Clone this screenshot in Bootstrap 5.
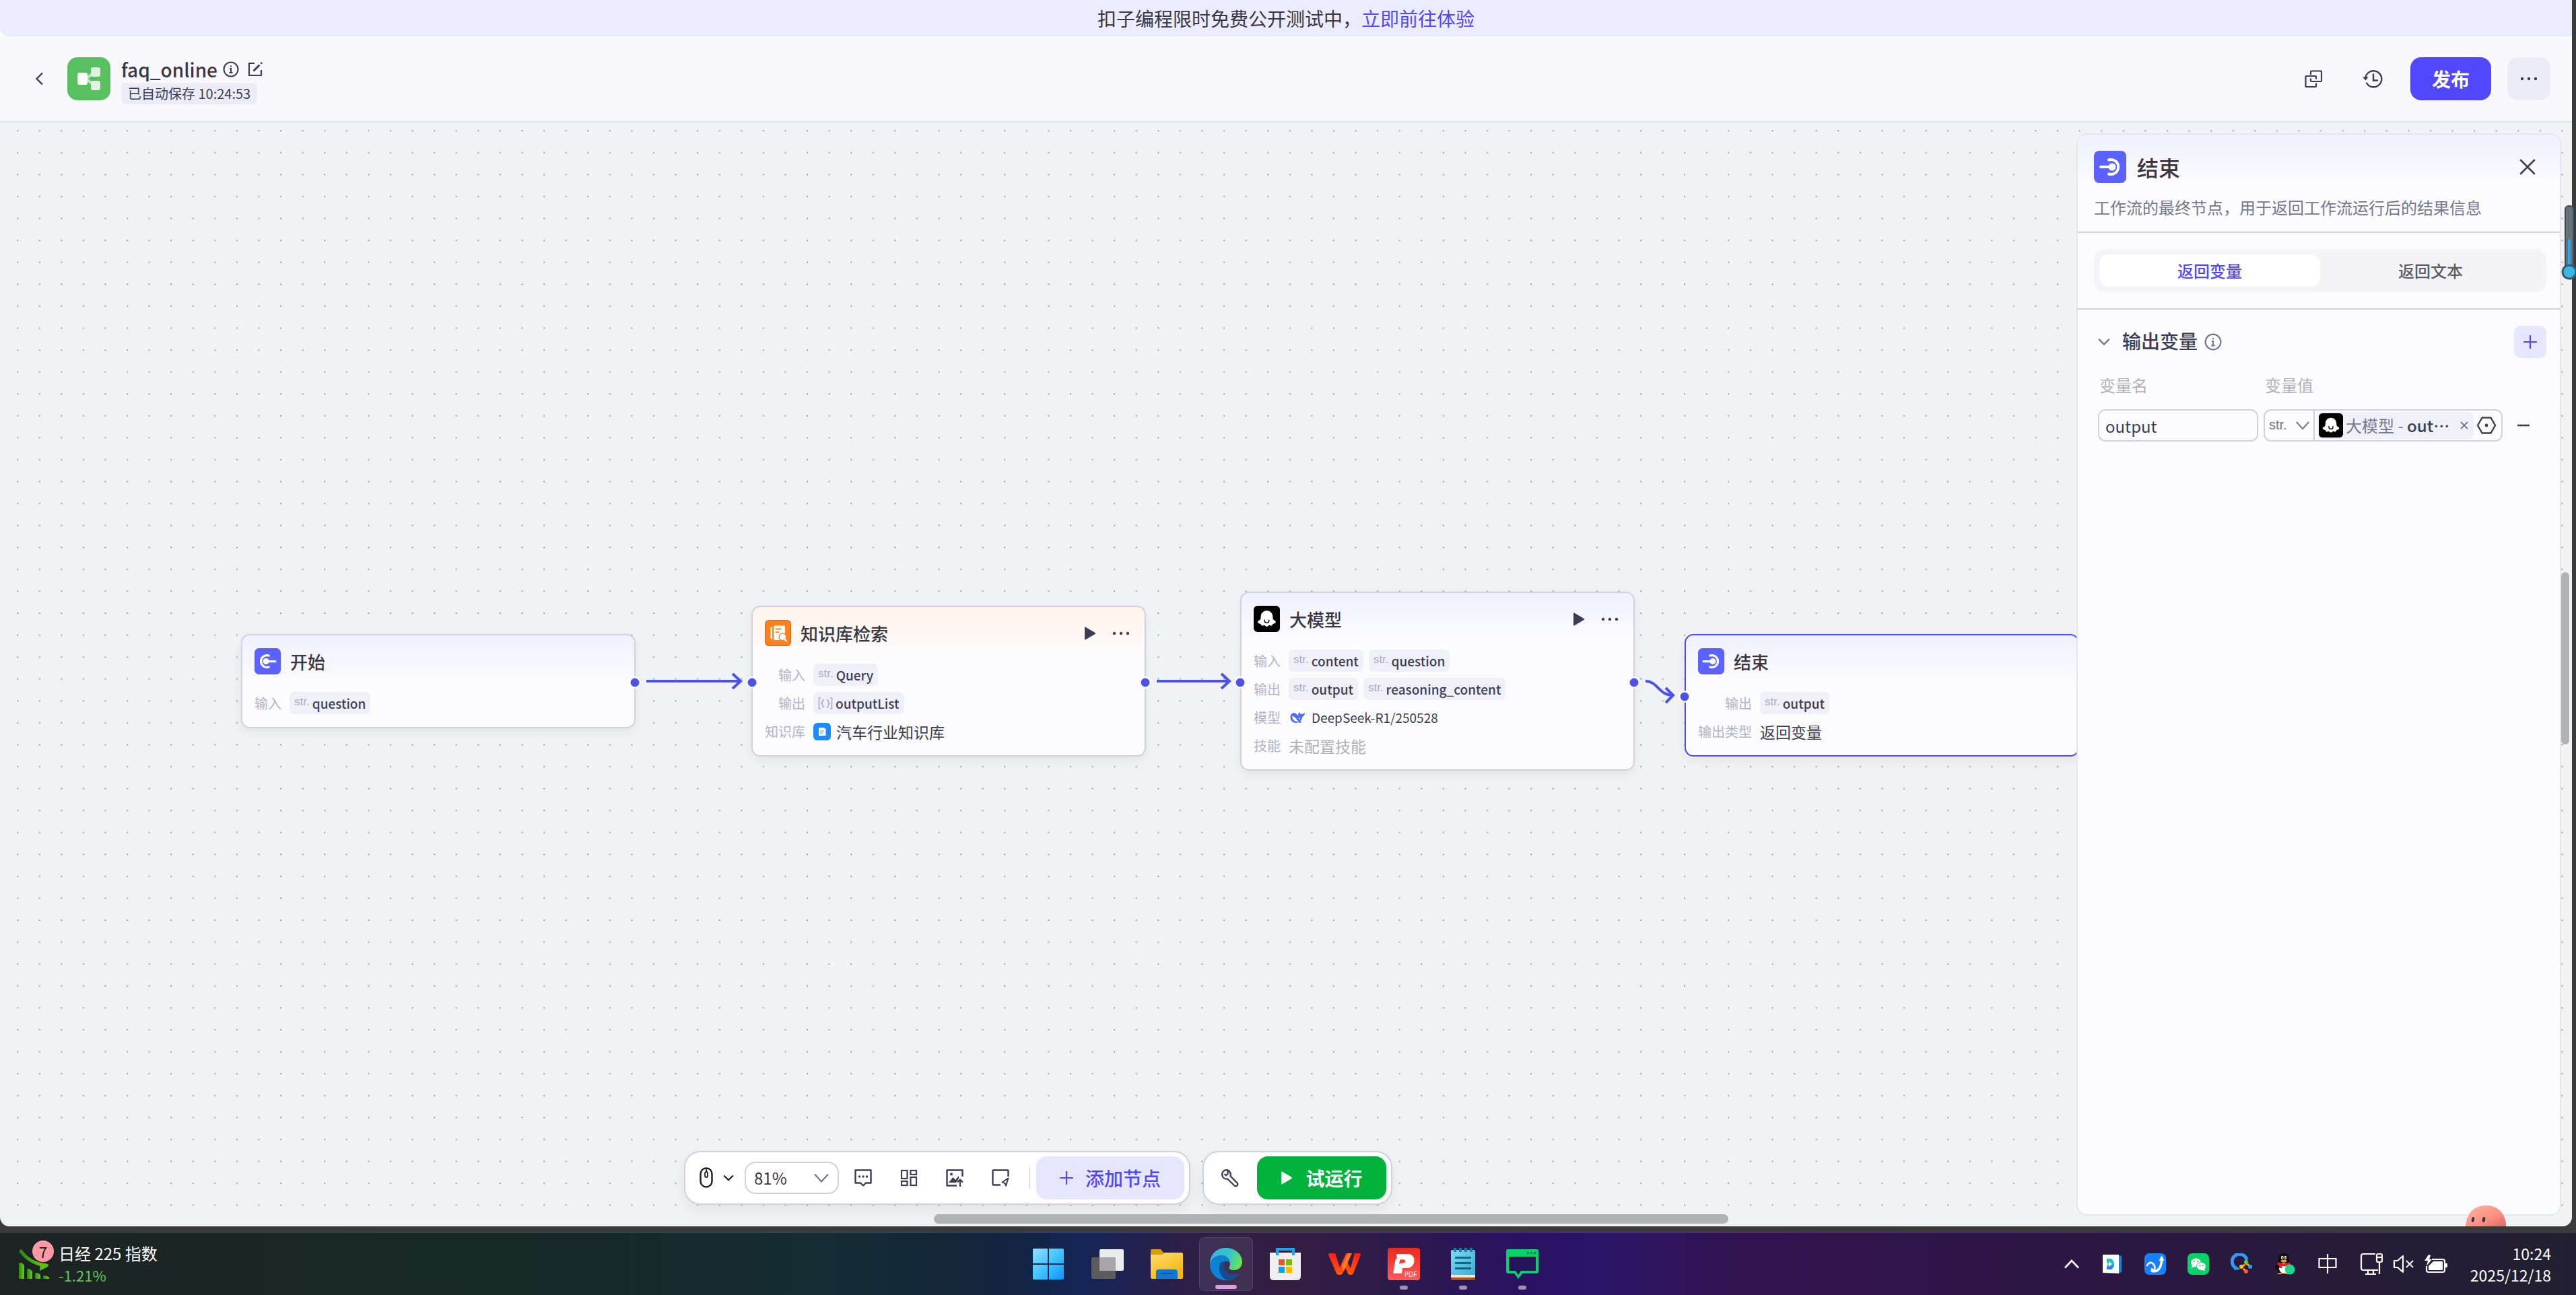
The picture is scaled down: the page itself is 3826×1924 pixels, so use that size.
<!DOCTYPE html>
<html lang="zh-CN">
<head>
<meta charset="utf-8">
<meta name="viewport" content="width=device-width, initial-scale=1">
<title>faq_online</title>
<link href="https://cdn.jsdelivr.net/npm/bootstrap@5.3.0/dist/css/bootstrap.min.css" rel="stylesheet">
<script src="https://cdn.jsdelivr.net/npm/bootstrap@5.3.0/dist/js/bootstrap.bundle.min.js"></script>
<style>
  :root { --ink:#383743; --ink2:#3b3d54; --muted:#73778f; --faint:#b0b4cb; --line:#cfd1e2; --soft:#e3e5f2; --brand:#5147ff; --edge:#4d53e8; }
  body { font-family:"Noto Sans CJK SC","Noto Sans",sans-serif; font-size:24px; line-height:32px; color:var(--ink); background:#3a3a3a; }
  svg { display:block; flex:none; }
  button { font-family:inherit; }
  .btn-plain { background:none; border:0; padding:0; color:var(--ink2); display:flex; align-items:center; justify-content:center; }
  .app-window { margin-right:6px; border-radius:0 0 14px 14px; background:#f1f2f4; overflow:hidden; }
  .notice-wrap { background:#fff; }
  .notice { height:54px; font-size:28px; background:#ebecff; border-radius:0 0 0 12px; }
  .notice a { color:var(--brand); text-decoration:none; }
  .topbar { height:128px; background:#f8f8fd; border-bottom:2px solid var(--soft); padding:0 32px 0 46px; }
  .flow-id { padding-top:4px; margin-left:14px; }
  .flow-name { font-size:28px; font-weight:500; line-height:40px; margin:0; }
  .saved-chip { font-size:20px; line-height:32px; padding:0 10px; border-radius:8px; background:#ebecf5; color:var(--ink2); }
  .box64 { width:64px; height:64px; border-radius:16px; }
  .btn-publish { width:120px; height:64px; border-radius:16px; background:var(--brand); color:#fff; font-size:28px; font-weight:700; padding:0; border:0; }
  .btn-more { background:#ebecf5; }

  .workspace { overflow:hidden; }
  .dots { position:absolute; inset:0; width:100%; height:100%; }
  .edges { position:absolute; left:0; top:0; overflow:visible; }
  .flow-node { position:absolute; width:586px; padding:19px 18px; border:2px solid var(--line); border-radius:13px; background:#fcfcff linear-gradient(#f1f1ff,#fcfcff) no-repeat 0 0/100% 80px; box-shadow:0 6px 16px rgba(0,0,0,.06); }
  .node-start { left:358px; top:760px; }
  .node-kb { left:1116px; top:718px; background-image:linear-gradient(#fff3e9,#fcfcff); }
  .node-llm { left:1842px; top:697px; }
  .node-end { left:2502px; top:760px; border-color:var(--brand); }
  .node-head { height:39px; margin-bottom:26px; font-size:26px; font-weight:500; gap:14px; }
  .node-body { display:grid; grid-template-columns:auto 1fr; gap:9px 12px; }
  .node-label { height:33px; line-height:33px; font-size:20px; color:var(--faint); text-align:right; }
  .node-value { height:33px; gap:8px; font-size:23px; color:var(--ink2); }
  .node-value.empty { color:#b1b1b7; }
  .var-chip { height:33px; padding:0 7px; gap:4px; border-radius:7px; background:#f0f0f9; font-size:19px; font-weight:500; color:var(--ink2); }
  .str { font-family:"Liberation Sans",sans-serif; font-size:17px; font-weight:400; color:#a9adc6; padding-bottom:3px; }
  .model-name { font-size:19px; }

  .dock { position:absolute; left:0; right:0; bottom:32px; gap:18px; }
  .dock-group { height:80px; border:2px solid var(--line); border-radius:24px; background:#fff; box-shadow:0 8px 20px rgba(0,0,0,.06); padding:6px 7px; }
  .form-select { --bs-form-select-bg-img:url("data:image/svg+xml,%3Csvg xmlns='http://www.w3.org/2000/svg' viewBox='0 0 24 24'%3E%3Cpath d='M2 6.500 12 17.500 22 6.500' fill='none' stroke='%2373778f' stroke-width='2.200'/%3E%3C/svg%3E"); }
  .mouse-btn { margin-left:14px; }
  .mouse-caret { margin:0 16px 0 15px; color:#1d1c23; }
  .zoom-select { width:140px; height:48px; border:2px solid var(--line); border-radius:16px; font-size:24px; line-height:32px; padding:0 12px; margin-right:22px; color:var(--ink); background-position:right 12px center; background-size:24px 24px; }
  .tool-gap { margin-left:40px; }
  .dock-sep { width:2px; height:32px; margin:0 9px 0 28px; background:#dcdde6; }
  .wrench-btn { margin:0 26px 0 18px; }
  .btn-add { height:64px; width:220px; border-radius:16px; background:#e6e7ff; color:var(--brand); font-size:28px; font-weight:500; gap:18px; }
  .btn-run { height:64px; width:192px; border-radius:16px; background:#00b23c; color:#fff; font-size:28px; font-weight:700; gap:19px; }
  .thumb { position:absolute; border-radius:7px; background:#b0b3b6; }
  .thumb-x { left:36.3%; width:30.9%; height:14px; bottom:4px; }
  .thumb-y { right:4px; width:12px; top:668px; height:256px; }

  .inspector { width:720px; margin:16px 16px 16px 0; border:2px solid var(--soft); border-radius:16px; background:#fcfcff; overflow:hidden; z-index:2; }
  .inspector-head { height:146px; padding:24px 34px 0 24px; border-bottom:2px solid var(--line); background:linear-gradient(#f1f1ff,#fcfcff 84px); }
  .inspector-title { font-size:32px; line-height:48px; font-weight:500; margin:0; }
  .inspector-desc { color:var(--muted); margin:20px 0 0; }
  .tab-band { height:114px; padding:24px 20px 24px 24px; border-bottom:2px solid var(--line); }
  .seg { height:64px; padding:8px; border-radius:16px; background:#f4f4f7; }
  .seg .nav-link { height:48px; padding:0; border-radius:14px; color:#5d5c66; font-weight:500; }
  .seg .nav-link.active { background:#fff; color:var(--brand); }
  .section-body { padding:24px 20px 0 30px; }
  .section-title { font-size:28px; line-height:32px; font-weight:500; margin:0 10px 4px 18px; color:var(--ink2); }
  .tone-muted { color:var(--muted); }
  .btn-addvar { width:48px; height:48px; border-radius:10px; background:#e6e7ff; color:var(--brand); }
  .labels-row { margin:22px 0 18px; }
  .col-name { width:238px; margin-right:8px; }
  .col-label { color:#b1b1b7; padding-left:2px; line-height:36px; }
  .name-input { height:48px; border:2px solid var(--line); border-radius:11px; font-size:24px; padding:0 9px; color:var(--ink2); background:#fcfcff; }
  .value-box { width:355px; height:48px; border:2px solid var(--line); border-radius:11px; overflow:hidden; }
  .type-select { width:74px; height:44px; border:0; border-right:2px solid var(--line); border-radius:0; padding:0 0 2px 6px; font-family:"Liberation Sans",sans-serif; font-size:20px; color:var(--muted); background-color:transparent; background-position:right 5px center; background-size:22px 22px; }
  .ref-tag { height:40px; margin-left:4px; padding:0 8px 0 2px; border-radius:8px; background:#f0f0f9; color:var(--muted); }
  .ref-tag b { font-weight:500; color:var(--ink2); }
  .minus-btn { margin-left:21px; }

  .side-gauge { position:absolute; right:0; top:304px; z-index:5; }
  .mascot { position:absolute; right:97px; bottom:0; z-index:4; }

  .taskbar { height:94px; margin-top:8px; border-top:2px solid rgba(255,255,255,.12); color:#fff;
    background:linear-gradient(90deg,#1c2423 0,#182927 20%,#142c33 32%,#13253d 38.7%,#152557 42%,#2d1f48 46%,#341e42 50%,#2e1a4a 54%,#2a1263 59%,#2b1568 62%,#33144f 68%,#2e1548 76%,#2a1840 84%,#222030 100%); }
  .side { flex:1 1 0; }
  .task-tile { width:80px; height:80px; border-radius:8px; position:relative; }
  .task-tile.on { background:rgba(255,255,255,.08); border:1px solid rgba(255,255,255,.09); }
  .task-tile.on::after, .task-tile.run::after { content:""; position:absolute; bottom:2px; width:12px; height:6px; border-radius:3px; background:#9d92ad; }
  .task-tile.on::after { width:32px; background:#dd9fe2; }
  .widget-icon { margin-left:28px; }
  .dot-badge { position:absolute; left:20px; top:-12px; width:32px; height:32px; border-radius:50%; background:#ff9aa5; color:#111; font-size:22px; line-height:32px; }
  .widget-text { margin-left:13px; }
  .widget-down { font-size:22px; color:#63c75b; }
  .tray { gap:32px; padding-right:8px; }
  .tray-sys { gap:15px; }
  .clock { font-size:23px; margin:0 29px 0 2px; }
</style>
</head>
<body class="vh-100 d-flex flex-column overflow-hidden">

<svg width="0" height="0" class="position-absolute" aria-hidden="true">
  <defs>
    <linearGradient id="gWin" x1="0" y1="0" x2="1" y2="1"><stop offset="0" stop-color="#8fe0ff"/><stop offset=".5" stop-color="#45c4fb"/><stop offset="1" stop-color="#0a94ff"/></linearGradient>
    <linearGradient id="gFold" x1="0" y1="0" x2="0.6" y2="1"><stop offset="0" stop-color="#ffdf70"/><stop offset="1" stop-color="#f7b50c"/></linearGradient>
    <linearGradient id="gEdgeTop" x1="0" y1="0.3" x2="1" y2="0.6"><stop offset="0" stop-color="#35b3ea"/><stop offset=".55" stop-color="#35c6c4"/><stop offset="1" stop-color="#6ce34f"/></linearGradient>
    <linearGradient id="gEdgeLow" x1="0" y1="0" x2="0" y2="1"><stop offset="0" stop-color="#0f7fca"/><stop offset="1" stop-color="#0a86dc"/></linearGradient>
    <linearGradient id="gStock" x1="0" y1="0" x2="1" y2="0"><stop offset="0" stop-color="#2a8a14"/><stop offset="1" stop-color="#6ccc0c"/></linearGradient>
    <linearGradient id="gPdf" x1="0" y1="0" x2="0" y2="1"><stop offset="0" stop-color="#e92a1e"/><stop offset="1" stop-color="#ff5a5a"/></linearGradient>
    <linearGradient id="gNote" x1="0" y1="0" x2="1" y2="1"><stop offset="0" stop-color="#7edcf6"/><stop offset="1" stop-color="#3fa9d0"/></linearGradient>
    <linearGradient id="gBlob" x1="0" y1="0" x2="1" y2="1"><stop offset="0" stop-color="#ffb5a2"/><stop offset=".6" stop-color="#ff8f83"/><stop offset="1" stop-color="#d66a66"/></linearGradient>
    <linearGradient id="gWps" x1="0" y1="0" x2="0" y2="1"><stop offset="0" stop-color="#ff1d1d"/><stop offset="1" stop-color="#ff5a0a"/></linearGradient>
  </defs>
  <symbol id="i-info" viewBox="0 0 24 24"><circle cx="12" cy="12" r="10.5" fill="none" stroke="currentColor" stroke-width="2"/><path d="M12 6.4v2.2M10 11h2v6M9.5 17h5" fill="none" stroke="currentColor" stroke-width="2"/></symbol>
  <symbol id="i-dots" viewBox="0 0 26 6"><g fill="currentColor"><circle cx="3" cy="3" r="2.2"/><circle cx="13" cy="3" r="2.2"/><circle cx="23" cy="3" r="2.2"/></g></symbol>
  <symbol id="i-play" viewBox="0 0 18 20"><path d="M1 1.5Q1 0 2.5 .8L16.5 9q1.2 1 0 2L2.5 19.2Q1 20 1 18.5z" fill="currentColor"/></symbol>
  <symbol id="i-down" viewBox="0 0 20 12"><path d="M1.5 1.5 10 10l8.500-8.500" fill="none" stroke="currentColor" stroke-width="2.600"/></symbol>
  <symbol id="i-plus" viewBox="0 0 20 20"><path d="M10 1v18M1 10h18" fill="none" stroke="currentColor" stroke-width="2.2" stroke-linecap="round"/></symbol>
  <symbol id="i-start" viewBox="0 0 48 48"><rect width="48" height="48" rx="8" fill="#5c62ff"/><path d="M26 13.500a11 11 0 1 0 0 21" fill="none" stroke="#fff" stroke-width="4" stroke-linecap="round"/><circle cx="21" cy="24" r="5.500" fill="#fff"/><path d="M21 24h17" stroke="#fff" stroke-width="4" stroke-linecap="round"/></symbol>
  <symbol id="i-end" viewBox="0 0 48 48"><rect width="48" height="48" rx="8" fill="#5c62ff"/><path d="M22 13.500a11 11 0 1 1 0 21" fill="none" stroke="#fff" stroke-width="4" stroke-linecap="round"/><circle cx="27" cy="24" r="5.500" fill="#fff"/><path d="M10 24h17" stroke="#fff" stroke-width="4" stroke-linecap="round"/></symbol>
  <symbol id="i-llm" viewBox="0 0 48 48"><rect width="48" height="48" rx="7" fill="#000"/><path d="M24 9c-7 0-11 5.500-11 12 0 3-.5 4.500-2.500 5.500-3.500 1-4 5 0 6 2 .4 2.500.5 3 2 .8 2.500 4 2.500 5.500 1 1.200-.8 1.800 2.500 5 2.500s3.800-3.300 5-2.500c1.500 1.500 4.700 1.500 5.500-1 .5-1.500 1-1.600 3-2 4-1 3.500-5 0-6-2-1-2.500-2.500-2.500-5.500C35 14.500 31 9 24 9z" fill="#fff"/><path d="M20 26v1.500c0 5 8 5 8 0V26" fill="none" stroke="#000" stroke-width="1.800" stroke-linecap="round"/></symbol>
  <symbol id="i-kb" viewBox="0 0 48 48"><rect x=".75" y=".75" width="46.500" height="46.500" rx="7" fill="#ff811a" stroke="#c9722c" stroke-width="1.500"/><rect x="10.500" y="13" width="3" height="22" rx="1.500" fill="#fff"/><path d="M18 10.500h17a2 2 0 0 1 2 2V26a7 7 0 0 0-9 11H18a2 2 0 0 1-2-2V12.500a2 2 0 0 1 2-2z" fill="#fff"/><path d="M20 16.500h9M20 22.500h5" stroke="#ff811a" stroke-width="2.500" stroke-linecap="round"/><circle cx="32.500" cy="31" r="5" fill="#fff" stroke="#fff" stroke-width="3"/><circle cx="32.500" cy="31" r="6.500" fill="none" stroke="#ff811a" stroke-width="1.500"/><path d="M36 35l3 3.500" stroke="#fff" stroke-width="2.500" stroke-linecap="round"/></symbol>
</svg>

<div class="app-window flex-grow-1 d-flex flex-column">
  <div class="notice-wrap"><div class="notice d-flex align-items-center justify-content-center">扣子编程限时免费公开测试中，<a href="#">立即前往体验</a></div></div>

  <header class="topbar d-flex align-items-center">
    <button class="btn-plain" aria-label="返回"><svg width="24" height="24" viewBox="0 0 24 24"><path d="M17 3.500 8.500 12l8.500 8.500" fill="none" stroke="currentColor" stroke-width="2.400"/></svg></button>
    <svg class="ms-4" width="72" height="64" viewBox="-6 0 72 64"><rect width="64" height="64" rx="15" fill="#58c060"/><path d="M28 32l12-10M28 32l12 10" stroke="#c0e8c3" stroke-width="4"/><rect x="35" y="15" width="14" height="14" rx="3" fill="#dff2e0"/><rect x="35" y="35" width="14" height="14" rx="3" fill="#dff2e0"/><rect x="15" y="23" width="15" height="18" rx="3" fill="#fff"/></svg>
    <div class="flow-id d-flex flex-column align-items-start">
      <div class="d-flex align-items-center">
        <h1 class="flow-name">faq_online</h1>
        <button class="btn-plain ms-2" aria-label="信息"><svg width="24" height="24"><use href="#i-info"/></svg></button>
        <button class="btn-plain ms-2 ps-1" aria-label="编辑"><svg width="24" height="24" viewBox="0 0 24 24"><path d="M11 3H3v18h18v-8" fill="none" stroke="currentColor" stroke-width="2.200" stroke-linejoin="round"/><path d="M9.500 14.500 18.500 5.500M20.500 3.500l1.500-1.500" stroke="currentColor" stroke-width="3"/></svg></button>
      </div>
      <span class="saved-chip">已自动保存 10:24:53</span>
    </div>
    <div class="ms-auto d-flex align-items-center">
      <button class="btn-plain box64" aria-label="复制"><svg width="28" height="28" viewBox="0 0 28 28"><g fill="none" stroke="currentColor" stroke-width="2.200" stroke-linejoin="round"><path d="M10 8V3.500Q10 2.500 11 2.500H25Q26 2.500 26 3.500V17Q26 18 25 18H11Q10 18 10 17V13.500"/><path d="M18 20.500V25Q18 26 17 26H3.500Q2.500 26 2.500 25V11Q2.500 10 3.500 10H17Q18 10 18 11V14.500"/></g></svg></button>
      <button class="btn-plain box64 mx-4" aria-label="历史"><svg width="32" height="32" viewBox="0 0 32 32"><path d="M5.500 14a12 12 0 1 1 1.500 8.500" fill="none" stroke="currentColor" stroke-width="2.400" stroke-linecap="round"/><path d="M1 13.500h8.500L5.500 18.500z" fill="currentColor"/><path d="M17 9.500v9h6" fill="none" stroke="currentColor" stroke-width="2.400" stroke-linecap="round"/></svg></button>
      <button class="btn btn-publish">发布</button>
      <button class="btn-plain box64 btn-more ms-4" aria-label="更多"><svg width="26" height="6"><use href="#i-dots"/></svg></button>
    </div>
  </header>

  <main class="workspace flex-grow-1 position-relative d-flex">
    <svg class="dots" aria-hidden="true"><defs><pattern id="dotgrid" x="25" y="11" width="32.580" height="32.580" patternUnits="userSpaceOnUse"><circle cx="1.200" cy="1.300" r="1.100" fill="#8b8f96"/></pattern></defs><rect width="100%" height="100%" fill="url(#dotgrid)"/></svg>

    <section class="flex-grow-1 position-relative" aria-label="画布">
      <article class="flow-node node-start">
        <div class="node-head d-flex align-items-center"><svg width="39" height="39"><use href="#i-start"/></svg>开始</div>
        <div class="node-body">
          <div class="node-label">输入</div><div class="node-value d-flex align-items-center"><span class="var-chip d-flex align-items-center"><span class="str">str.</span>question</span></div>
        </div>
      </article>

      <article class="flow-node node-kb">
        <div class="node-head d-flex align-items-center"><svg width="39" height="39"><use href="#i-kb"/></svg>知识库检索
          <div class="ms-auto d-flex gap-4 me-1"><button class="btn-plain" aria-label="运行"><svg width="18" height="20"><use href="#i-play"/></svg></button><button class="btn-plain" aria-label="更多"><svg width="26" height="6"><use href="#i-dots"/></svg></button></div></div>
        <div class="node-body">
          <div class="node-label">输入</div><div class="node-value d-flex align-items-center"><span class="var-chip d-flex align-items-center"><span class="str">str.</span>Query</span></div>
          <div class="node-label">输出</div><div class="node-value d-flex align-items-center"><span class="var-chip d-flex align-items-center"><svg width="22" height="18" viewBox="0 0 22 18"><path d="M4 1H1.500v16H4M18 1h2.500v16H18M9 3.500Q7 3.500 7 5.500T5 9q2 1 2 3.500T9 14.500M13 3.500q2 0 2 2T17 9q-2 1-2 3.500T13 14.500" fill="none" stroke="#a9adc6" stroke-width="1.700"/></svg>outputList</span></div>
          <div class="node-label">知识库</div><div class="node-value d-flex align-items-center"><svg width="26" height="26" viewBox="0 0 26 26"><rect width="26" height="26" rx="6" fill="#1b8cff"/><path d="M8 7h8l2.500 2.500V19H8z" fill="#fff"/><path d="M10 12h6M10 15h4" stroke="#7dbdff" stroke-width="1.500"/></svg>汽车行业知识库</div>
        </div>
      </article>

      <article class="flow-node node-llm">
        <div class="node-head d-flex align-items-center"><svg width="39" height="39"><use href="#i-llm"/></svg>大模型
          <div class="ms-auto d-flex gap-4 me-1"><button class="btn-plain" aria-label="运行"><svg width="18" height="20"><use href="#i-play"/></svg></button><button class="btn-plain" aria-label="更多"><svg width="26" height="6"><use href="#i-dots"/></svg></button></div></div>
        <div class="node-body">
          <div class="node-label">输入</div><div class="node-value d-flex align-items-center"><span class="var-chip d-flex align-items-center"><span class="str">str.</span>content</span><span class="var-chip d-flex align-items-center"><span class="str">str.</span>question</span></div>
          <div class="node-label">输出</div><div class="node-value d-flex align-items-center"><span class="var-chip d-flex align-items-center"><span class="str">str.</span>output</span><span class="var-chip d-flex align-items-center"><span class="str">str.</span>reasoning_content</span></div>
          <div class="node-label">模型</div><div class="node-value d-flex align-items-center"><svg width="26" height="26" viewBox="0 0 26 26"><circle cx="13" cy="13" r="13" fill="#fff"/><path d="M2.500 13c0-5 3-7.500 7-6.500 2 .5 3 2.500 5 4-.8-2.500 0-4.500 1.500-5.500.3 2 1.300 2.900 3 2.800 1.500 0 3-.6 5-1.900-.2 3-1.200 5-3.500 5.800-.3 2.700-1.500 4.700-3 6.500l1.500 2c-1.500 1-3 .6-4-.3-5 2.600-12.500.1-12.500-6.900z" fill="#4d6bfe"/><path d="M5 11c1.500 0 4 1 5.500 3s2.500 4 4.500 4.500c-4 1.500-9-.5-10-7.500z" fill="#fff"/><path d="M14.500 13c1.500 0 2.500 1.200 2.200 2.700-1.400-.1-2.300-1.200-2.200-2.700z" fill="#fff"/></svg><span class="model-name">DeepSeek-R1/250528</span></div>
          <div class="node-label">技能</div><div class="node-value empty d-flex align-items-center">未配置技能</div>
        </div>
      </article>

      <article class="flow-node node-end">
        <div class="node-head d-flex align-items-center"><svg width="39" height="39"><use href="#i-end"/></svg>结束</div>
        <div class="node-body">
          <div class="node-label">输出</div><div class="node-value d-flex align-items-center"><span class="var-chip d-flex align-items-center"><span class="str">str.</span>output</span></div>
          <div class="node-label">输出类型</div><div class="node-value d-flex align-items-center">返回变量</div>
        </div>
      </article>

      <svg class="edges" width="3084" height="1200" viewBox="0 0 3084 1200" aria-hidden="true">
        <g fill="none" stroke="#4d53e8" stroke-width="4">
          <path d="M960 830H1098M1088 819l12 11-12 11"/>
          <path d="M1718 830H1824M1814 819l12 11-12 11"/>
          <path d="M2444 830C2462 830 2464 851 2484 851M2474 840l11 11-11 11"/>
        </g>
        <g fill="#4d53e8" stroke="#fff" stroke-width="2.500">
          <circle cx="943" cy="832" r="7.700"/><circle cx="1117" cy="832" r="7.700"/><circle cx="1701" cy="832" r="7.700"/>
          <circle cx="1842" cy="832" r="7.700"/><circle cx="2427" cy="832" r="7.700"/><circle cx="2502" cy="853" r="7.700"/>
        </g>
      </svg>

      <div class="dock d-flex justify-content-center">
        <div class="dock-group d-flex align-items-center">
          <button class="btn-plain mouse-btn" aria-label="鼠标模式"><svg width="20" height="32" viewBox="0 0 20 32"><rect x="1.500" y="1.500" width="17" height="28" rx="8.500" fill="none" stroke="#1d1c23" stroke-width="2.400"/><rect x="8" y="7" width="4" height="8" rx="2" fill="none" stroke="#1d1c23" stroke-width="1.800"/><path d="M10 1v6" stroke="#1d1c23" stroke-width="1.800"/></svg></button>
          <svg class="mouse-caret" width="16" height="10"><use href="#i-down"/></svg>
          <select class="form-select zoom-select" aria-label="缩放"><option>81%</option></select>
          <button class="btn-plain" aria-label="注释"><svg width="28" height="28" viewBox="0 0 28 28"><path d="M2.500 2.500h23v19H18l-4 4-4-4H2.500z" fill="none" stroke="currentColor" stroke-width="2.400" stroke-linejoin="round"/><g fill="currentColor"><circle cx="8.500" cy="12" r="1.700"/><circle cx="14" cy="12" r="1.700"/><circle cx="19.500" cy="12" r="1.700"/></g></svg></button>
          <button class="btn-plain tool-gap" aria-label="自动布局"><svg width="28" height="28" viewBox="0 0 28 28"><g fill="none" stroke="currentColor" stroke-width="2.200"><rect x="3" y="3" width="8.500" height="12"/><rect x="3" y="19" width="8.500" height="6"/><rect x="16.500" y="3" width="8.500" height="6"/><rect x="16.500" y="13" width="8.500" height="12"/></g></svg></button>
          <button class="btn-plain tool-gap" aria-label="导出图片"><svg width="28" height="28" viewBox="0 0 28 28"><path d="M25.500 12V2.500h-23v23H17" fill="none" stroke="currentColor" stroke-width="2.400" stroke-linejoin="round"/><circle cx="9" cy="8.500" r="2" fill="currentColor"/><path d="M5 21l6.500-8 3.500 4 5-6v4l-4 6z" fill="currentColor"/><path d="M22 27V17M18 20.500l4-4 4 4" fill="none" stroke="currentColor" stroke-width="2.200"/></svg></button>
          <button class="btn-plain tool-gap" aria-label="小地图"><svg width="28" height="28" viewBox="0 0 28 28"><path d="M25.500 12V3.500Q25.500 2.500 24.500 2.500H3.500Q2.500 2.500 2.500 3.500v20q0 1 1 1H14" fill="none" stroke="currentColor" stroke-width="2.400"/><path d="M25.500 14.500 16.500 20.500l4 1.200 1.500 4z" fill="none" stroke="currentColor" stroke-width="2" stroke-linejoin="round"/></svg></button>
          <div class="dock-sep"></div>
          <button class="btn-plain btn-add"><svg width="20" height="20"><use href="#i-plus"/></svg>添加节点</button>
        </div>
        <div class="dock-group d-flex align-items-center">
          <button class="btn-plain wrench-btn" aria-label="调试"><svg width="28" height="28" viewBox="0 0 28 28"><path d="M10.500 2.500C5 1 1 6 2.500 11c1 3.500 4.500 5 7.500 4.500l11 10.500c2.500 1 5-1.500 4-4L14.500 11.500c1-3.500-.5-7.500-4-9V8l-2.500 2.500L5.500 8" fill="none" stroke="currentColor" stroke-width="2.400" stroke-linejoin="round"/></svg></button>
          <button class="btn-plain btn-run"><svg width="18" height="20"><use href="#i-play"/></svg>试运行</button>
        </div>
      </div>
    </section>

    <aside class="inspector d-flex flex-column">
      <div class="inspector-head">
        <div class="d-flex align-items-center"><svg width="48" height="48"><use href="#i-end"/></svg><h2 class="inspector-title ms-3">结束</h2>
          <button class="btn-plain ms-auto" aria-label="关闭"><svg width="28" height="28" viewBox="0 0 28 28"><path d="M4 4l20 20M24 4 4 24" stroke="currentColor" stroke-width="2.600" stroke-linecap="round"/></svg></button></div>
        <p class="inspector-desc">工作流的最终节点，用于返回工作流运行后的结果信息</p>
      </div>
      <div class="tab-band">
        <div class="seg nav nav-pills nav-justified flex-nowrap" role="tablist"><button class="nav-link active" role="tab">返回变量</button><button class="nav-link" role="tab">返回文本</button></div>
      </div>
      <div class="section-body">
        <div class="d-flex align-items-center">
          <svg class="tone-muted" width="18" height="12"><use href="#i-down"/></svg>
          <h3 class="section-title">输出变量</h3>
          <svg class="tone-muted" width="26" height="26"><use href="#i-info"/></svg>
          <button class="btn-plain btn-addvar ms-auto" aria-label="新增"><svg width="20" height="20"><use href="#i-plus"/></svg></button>
        </div>
        <div class="d-flex labels-row"><label class="col-name col-label" for="varName">变量名</label><label class="col-label" for="varType">变量值</label></div>
        <div class="d-flex align-items-center">
          <input id="varName" class="form-control name-input col-name" value="output">
          <div class="value-box d-flex align-items-center">
            <select id="varType" class="form-select type-select"><option>str.</option></select>
            <span class="ref-tag d-flex align-items-center"><svg width="36" height="36"><use href="#i-llm"/></svg><span class="ms-1">大模型 - <b>out⋯</b></span>
              <button class="btn-plain tone-muted ms-3" aria-label="清除"><svg width="12" height="12" viewBox="0 0 12 12"><path d="M1 1l10 10M11 1 1 11" stroke="currentColor" stroke-width="1.800"/></svg></button></span>
            <button class="btn-plain ms-1" aria-label="设置"><svg width="30" height="28" viewBox="0 0 30 28"><path d="M8.500 2.500h13L28 14l-6.500 11.500h-13L2 14z" fill="none" stroke="currentColor" stroke-width="2.400" stroke-linejoin="round"/><circle cx="15" cy="14" r="2.400" fill="currentColor"/></svg></button>
          </div>
          <button class="btn-plain minus-btn" aria-label="删除"><svg width="20" height="4" viewBox="0 0 20 4"><path d="M1 2h18" stroke="currentColor" stroke-width="2.600"/></svg></button>
        </div>
      </div>
    </aside>

    <div class="thumb thumb-x"></div>
    <div class="thumb thumb-y"></div>
    <svg class="mascot" width="62" height="32" viewBox="0 0 62 32"><path d="M1 32C3 10 15 1 32 1s29 12 29 31z" fill="url(#gBlob)"/><g fill="#2f3a3d"><ellipse cx="12" cy="22" rx="2" ry="4" transform="rotate(10 12 22)"/><ellipse cx="28" cy="22" rx="2.200" ry="4" transform="rotate(10 28 22)"/></g></svg>
  </main>
</div>

<svg class="side-gauge" width="22" height="114" viewBox="0 0 22 114" aria-hidden="true"><rect x="6" y="2" width="12" height="100" rx="5" fill="#66727c" stroke="#3d4c57" stroke-width="2"/><rect x="10" y="52" width="4" height="50" fill="#2ba8ea"/><circle cx="12" cy="100" r="10" fill="#3ab8e8" stroke="#3d5a68" stroke-width="3"/></svg>

<footer class="taskbar d-flex align-items-center">
  <div class="side d-flex align-items-center">
    <div class="position-relative widget-icon"><svg width="46" height="46" viewBox="0 0 46 46"><path d="M3 4C12 16 24 23 40 25" fill="none" stroke="url(#gStock)" stroke-width="5" stroke-linecap="round"/><path d="M32 22l12 1-1 4-12 6z" fill="#5cc010"/><g fill="url(#gStock)"><path d="M0 22q4-3 8 3v20H2q-2 0-2-2z"/><path d="M12 31q3-3 8 3v11h-6q-2 0-2-2z"/><path d="M24 37q3-3 8 2v6h-6q-2 0-2-2z"/><path d="M36 41q5-2 9 2v2h-7q-2 0-2-2z"/></g></svg><span class="dot-badge text-center">7</span></div>
    <div class="widget-text"><div>日经 225 指数</div><div class="widget-down">-1.21%</div></div>
  </div>
  <div class="d-flex gap-2">
    <div class="task-tile d-flex align-items-center justify-content-center"><svg width="46" height="46" viewBox="0 0 46 46"><path fill="url(#gWin)" d="M2 0h20v22H0V2q0-2 2-2zM24 0h20q2 0 2 2v20H24zM0 24h22v22H2q-2 0-2-2zM24 24h22v20q0 2-2 2H24z"/></svg></div>
    <div class="task-tile d-flex align-items-center justify-content-center"><svg width="48" height="46" viewBox="0 0 48 46"><rect x="12" y="1" width="36" height="32" rx="2" fill="#ececec"/><rect x="0" y="13" width="36" height="32" rx="2" fill="#5c5c5c"/><rect x="12" y="13" width="24" height="20" fill="#a8a6ab"/></svg></div>
    <div class="task-tile d-flex align-items-center justify-content-center"><svg width="48" height="44" viewBox="0 0 48 44"><path d="M0 2q0-2 2-2h13l5 6v8H0z" fill="#dc9a05"/><path d="M0 8h17l4-3h25q2 0 2 2v35q0 2-2 2H2q-2 0-2-2z" fill="url(#gFold)"/><path d="M8 44V34q0-4 4-4h24q4 0 4 4v10z" fill="#0f78cf"/><path d="M15 36h18" stroke="#0a4f94" stroke-width="2"/></svg></div>
    <div class="task-tile on d-flex align-items-center justify-content-center"><svg width="48" height="48" viewBox="0 0 48 48"><path d="M0 22C1 8 11 0 24 0c14 0 24 10 24 21 0 7-5 12-12 12-5 0-9-2-7-5 3-5-1-11-8-11C12 17 4 18 0 22z" fill="url(#gEdgeTop)"/><path d="M0 24C1 16 9 11 17 11c9 0 13 6 13 12-2-4-6-4-9-2-4 3-4 11-1 16 4 7 14 9 24 0-4 7-12 11-20 11C10 48 0 38 0 24z" fill="url(#gEdgeLow)"/><path d="M16 22c-5 9-1 20 7 25 9 1 17-3 21-10-8 4-17 3-21-3-3-4-3-9-1-13-2-1-5 0-6 1z" fill="#144c8f"/></svg></div>
    <div class="task-tile d-flex align-items-center justify-content-center"><svg width="46" height="48" viewBox="0 0 46 48"><path d="M0 7h46v35q0 6-6 6H6q-6 0-6-6z" fill="#efefef"/><path d="M11 11V2h24v9" fill="none" stroke="#1ba7ee" stroke-width="4"/><path d="M13 17h9v9h-9z" fill="#f25022"/><path d="M24 17h9v9h-9z" fill="#7fba00"/><path d="M13 28h9v9h-9z" fill="#00a4ef"/><path d="M24 28h9v9h-9z" fill="#ffb900"/></svg></div>
    <div class="task-tile d-flex align-items-center justify-content-center"><svg width="48" height="32" viewBox="0 0 48 32"><path d="M1 0h9l7 21L25 2q1-2 3-2h6L21 30q-1 2-3 2h-3q-2 0-3-2L0 2q0-2 1-2z" fill="url(#gWps)"/><path d="M27 11l6 11 6-22h7q2 0 2 2L37 30q-1 2-3 2h-2q-2 0-3-2l-5-11z" fill="url(#gWps)"/><path d="M28 0h7L23 27l-3-8z" fill="#ff9a2e" opacity=".7"/></svg></div>
    <div class="task-tile run d-flex align-items-center justify-content-center"><svg width="48" height="48" viewBox="0 0 48 48"><rect width="48" height="48" rx="4" fill="url(#gPdf)"/><path d="M13 9h17c14 0 12 22-2 21h-6l-1 8H8l4-22h7l-2 7h3c3 0 7-1 6-4s-7-1-12-2z" fill="#fff"/><text x="25" y="43" font-size="10" fill="#fff" font-family="Noto Sans">PDF</text></svg></div>
    <div class="task-tile run d-flex align-items-center justify-content-center"><svg width="36" height="48" viewBox="0 0 36 48"><rect y="40" width="36" height="8" rx="2" fill="#a8520f"/><path d="M0 38h36v6H0z" fill="#e8e8e8"/><path d="M2 3h32q2 0 2 2v35H0V5q0-2 2-2z" fill="url(#gNote)"/><path d="M6 14.500h24M6 22.500h24M6 30.500h24" stroke="#0b6784" stroke-width="3"/><path d="M6 0v6M14 0v6M22 0v6M30 0v6" stroke="#1180a5" stroke-width="4"/></svg></div>
    <div class="task-tile run d-flex align-items-center justify-content-center"><svg width="48" height="44" viewBox="0 0 48 44"><path d="M3 0h42q3 0 3 3v30q0 3-3 3H24l-6 8-6-8H3q-3 0-3-3V3q0-3 3-3z" fill="#07d267"/><path d="M4 11h40v21H22l-4 6-4-6H4z" fill="#26155a"/><path d="M31 5.500h3M36 5.500h3M41 5.500h3" stroke="#0a7f45" stroke-width="3"/></svg></div>
  </div>
  <div class="side tray d-flex align-items-center justify-content-end">
    <svg width="24" height="14" viewBox="0 0 24 14"><path d="M2 12.500 12 2l10 10.500" fill="none" stroke="#fff" stroke-width="2.600"/></svg>
    <svg width="32" height="32" viewBox="0 0 32 32"><path d="M26 3l4 1v24l-4 2z" fill="#0a86d8"/><path d="M2 2h24v28L2 29z" fill="#fdfdfd"/><path d="M8 8h7q8 8 0 16H8v-6l3-2-3-2z" fill="#16c4cf"/><path d="M15 24q4-4 4-8l-4 2-7 3v3z" fill="#1b86ff"/><path d="M11 12l5 4-5 4z" fill="#fff"/></svg>
    <svg width="32" height="32" viewBox="0 0 32 32"><rect width="32" height="32" rx="7" fill="#1780ff"/><path d="M4 18c4-7 9-4 11 1s-3 8-4 4" fill="none" stroke="#fff" stroke-width="2.500" stroke-linecap="round"/><path d="M11 26c8 3 14-4 14.500-15" fill="none" stroke="#fff" stroke-width="3.500" stroke-linecap="round"/><path d="M25.500 3l4 8h-8z" fill="#fff"/></svg>
    <svg width="32" height="32" viewBox="0 0 32 32"><rect width="32" height="32" rx="7" fill="#07d267"/><ellipse cx="12.500" cy="14" rx="7.500" ry="6.500" fill="#fff"/><path d="M7 18l-1 4 4-2z" fill="#fff"/><ellipse cx="20.500" cy="19.500" rx="6.800" ry="6" fill="#fff" stroke="#07d267"/><path d="M25 23l1 3-4-1z" fill="#fff"/><g fill="#07c160"><circle cx="10" cy="12" r="1.100"/><circle cx="15" cy="12" r="1.100"/><circle cx="18.500" cy="18.500" r="1"/><circle cx="22.800" cy="18.500" r="1"/></g></svg>
    <svg width="32" height="32" viewBox="0 0 32 32"><path d="M8 22A11 11 0 1 1 24 10" fill="none" stroke="#2e9bff" stroke-width="5"/><path d="M4 25l6-5 4 4z" fill="#2e9bff"/><path d="M23 13v4M16 20l5-3M23 27l-4-4M29 20l-4-4" stroke="#ffb400" stroke-width="3"/><circle cx="23" cy="13" r="3" fill="#5ddb2d"/><circle cx="16" cy="20" r="3" fill="#ffc400"/><circle cx="29" cy="20" r="3" fill="#28a2ff"/><circle cx="23" cy="27" r="3" fill="#ff5a2a"/></svg>
    <svg width="32" height="32" viewBox="0 0 32 32"><path d="M7 10C7 3 10 0 15 0s8 3 8 10c3 5 5 9 4 14l-3-2c0 4-2 6-3 7H9c-2-1-3-3-3-7l-3 2C2 19 4 15 7 10z" fill="#0c0c0c"/><ellipse cx="15" cy="22" rx="7" ry="8" fill="#fff"/><path d="M6 13c6 3 12 3 18 0l1 4c-7 3-13 3-20 0z" fill="#ee1c24"/><path d="M8 16h4v6H8z" fill="#ee1c24"/><ellipse cx="12.800" cy="6.500" rx="1.800" ry="2.800" fill="#fff"/><ellipse cx="17.200" cy="6.500" rx="1.800" ry="2.800" fill="#fff"/><circle cx="13.200" cy="7" r=".9"/><circle cx="16.800" cy="7" r=".9"/><ellipse cx="15" cy="11.500" rx="4.500" ry="1.700" fill="#ffae00"/><path d="M5 31q4-4 8 0zM16 31q4-4 8 0z" fill="#ffae00"/><circle cx="24" cy="24" r="7.500" fill="#1ed690"/></svg>
    <svg width="32" height="32" viewBox="0 0 32 32"><path d="M3.500 8h25v13h-25zM16 1v29" fill="none" stroke="#fff" stroke-width="2.200"/></svg>
    <div class="tray-sys d-flex align-items-center">
      <svg width="34" height="34" viewBox="0 0 34 34"><g fill="none" stroke="#fff" stroke-width="2.200"><path d="M23 2H5Q2 2 2 5v18q0 3 3 3h22M12 26v5M20 26v5M8 32h16M29 15v17"/><rect x="25" y="2" width="8" height="12" rx="2"/><path d="M25 7h8"/></g></svg>
      <svg width="32" height="28" viewBox="0 0 32 28"><path d="M2 9h5l8-7v24l-8-7H2z" fill="none" stroke="#fff" stroke-width="2.200" stroke-linejoin="round"/><path d="M20 9l10 10M30 9 20 19" stroke="#fff" stroke-width="2"/></svg>
      <svg width="34" height="28" viewBox="0 0 34 28"><path d="M11 7h16q3 0 3 3v13q0 3-3 3H6q-3 0-3-3v-6" fill="none" stroke="#fff" stroke-width="2.200"/><path d="M13 10h13q1 0 1 1v11q0 1-1 1H7q-1 0-1-1v-5z" fill="#fff"/><path d="M31 13h3v6h-3z" fill="#fff"/><path d="M6 0 0 9h5L3 17l8-10H7l2-6z" fill="#fff"/></svg>
    </div>
    <div class="clock text-end"><div>10:24</div><div>2025/12/18</div></div>
  </div>
</footer>
</body>
</html>
